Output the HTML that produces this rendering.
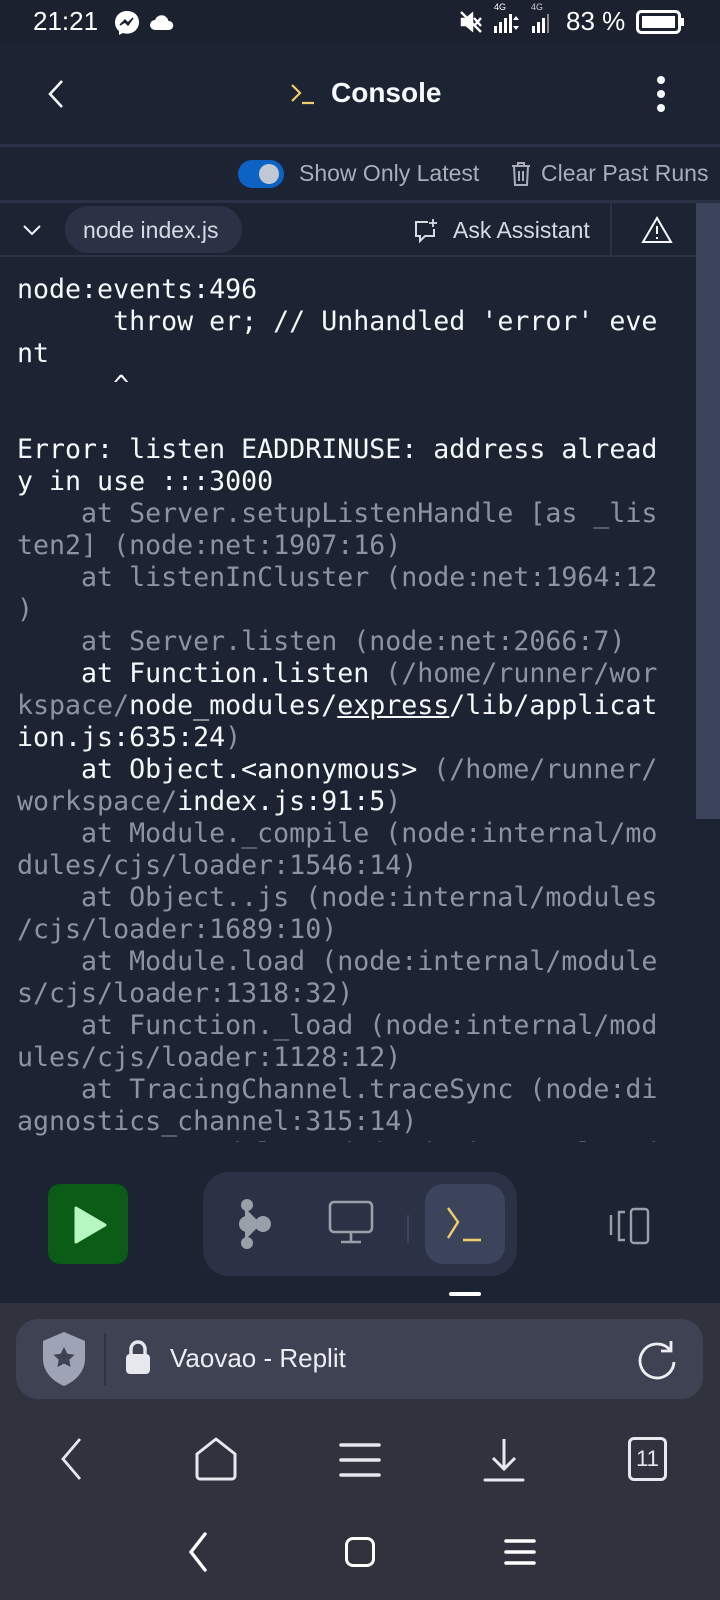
<!DOCTYPE html>
<html><head><meta charset="utf-8"><style>
*{margin:0;padding:0;box-sizing:border-box}
body{width:720px;height:1600px;background:#1c2333;position:relative;overflow:hidden;font-family:"Liberation Sans",sans-serif;color:#f5f9fc}
.abs{position:absolute}
.con{position:absolute;left:17px;top:274px;width:680px;height:868px;overflow:hidden;font-family:"DejaVu Sans Mono",monospace;font-size:26.6px;line-height:32px;white-space:pre;color:#f5f9fc}
.g{color:#8c93a1}
.u{text-decoration:underline}
svg{position:absolute;overflow:visible}
</style></head><body>
<!-- status bar -->
<div class="abs" style="left:0;top:0;width:720px;height:44px;background:#1c2130"></div>
<div class="abs" style="left:33px;top:6px;font-size:26px;color:#fff">21:21</div>
<svg style="left:114px;top:10px" width="26" height="26" viewBox="0 0 26 26"><path d="M13 1C6 1 1 6 1 12.5c0 3.5 1.5 6.5 4 8.5v4l3.8-2c1.3.4 2.7.6 4.2.6 7 0 12-5 12-11.5S20 1 13 1z" fill="#fff"/><path d="M6 15l5-5 3 3 5-5-5 7-3-3z" fill="#1c2130" stroke="#1c2130" stroke-width="1.5"/></svg>
<svg style="left:150px;top:13px" width="24" height="18" viewBox="0 0 24 18"><path d="M5 17a5 5 0 010-10 7 7 0 0113.5 1A4.5 4.5 0 0119 17z" fill="#fff"/></svg>
<svg style="left:459px;top:10px" width="24" height="24" viewBox="0 0 24 24" fill="none" stroke="#fff" stroke-width="2.4"><path d="M3 9h4l6-5v16l-6-5H3z" fill="#fff"/><path d="M15 8l7 8M22 8l-7 8M2 2l20 20"/></svg>
<div class="abs" style="left:494px;top:2px;font-size:9px;color:#fff">4G</div>
<div class="abs" style="left:531px;top:2px;font-size:9px;color:#ccc">4G</div>
<svg style="left:494px;top:13px" width="60" height="20" viewBox="0 0 60 20" fill="#fff"><rect x="0" y="13" width="3" height="7"/><rect x="5" y="9" width="3" height="11"/><rect x="10" y="5" width="3" height="15"/><rect x="15" y="1" width="3" height="19"/><path d="M20 3l3 4h-6zM20 17l3-4h-6z" transform="translate(2 0)"/><rect x="38" y="13" width="3" height="7"/><rect x="43" y="9" width="3" height="11"/><rect x="48" y="5" width="3" height="15"/><rect x="53" y="1" width="2" height="19" fill="#888"/></svg>
<div class="abs" style="left:566px;top:6px;font-size:26px;color:#fff">83 %</div>
<svg style="left:636px;top:10px" width="50" height="24" viewBox="0 0 50 24"><rect x="1.5" y="1.5" width="42" height="21" rx="4" fill="none" stroke="#fff" stroke-width="3"/><rect x="6" y="6" width="33" height="12" fill="#fff"/><rect x="45" y="8" width="3" height="8" fill="#fff"/></svg>
<!-- header -->
<svg style="left:46px;top:79px" width="20" height="30" viewBox="0 0 20 30"><path d="M16 2L4 15l12 13" fill="none" stroke="#f5f9fc" stroke-width="2.6"/></svg>
<svg style="left:290px;top:83px" width="26" height="22" viewBox="0 0 26 22" fill="none" stroke="#f2cb6b" stroke-width="2.2"><path d="M2 2l8 8-8 8M12 20h12"/></svg>
<div class="abs" style="left:331px;top:77px;font-size:28px;font-weight:bold;color:#f5f9fc">Console</div>
<svg style="left:655px;top:75px" width="12" height="38" viewBox="0 0 12 38" fill="#f5f9fc"><circle cx="6" cy="5" r="4"/><circle cx="6" cy="19" r="4"/><circle cx="6" cy="33" r="4"/></svg>
<div class="abs" style="left:0;top:144px;width:720px;height:3px;background:#2b3245"></div>
<!-- toolbar -->
<div class="abs" style="left:238px;top:160px;width:46px;height:28px;border-radius:14px;background:#0c63c4"></div>
<div class="abs" style="left:259px;top:164px;width:20px;height:20px;border-radius:10px;background:#c2c8d3"></div>
<div class="abs" style="left:299px;top:160px;font-size:23px;color:#a8afbb">Show Only Latest</div>
<svg style="left:511px;top:161px" width="20" height="26" viewBox="0 0 20 26" fill="none" stroke="#a8afbb" stroke-width="2"><path d="M1 5h18M7 5V2h6v3M3 5l1 19h12l1-19M8 10v10M12 10v10"/></svg>
<div class="abs" style="left:541px;top:160px;font-size:23px;color:#a8afbb">Clear Past Runs</div>
<div class="abs" style="left:0;top:200px;width:720px;height:3px;background:#2b3245"></div>
<!-- tab row -->
<svg style="left:22px;top:224px" width="20" height="12" viewBox="0 0 20 12"><path d="M2 2l8 8 8-8" fill="none" stroke="#f5f9fc" stroke-width="2"/></svg>
<div class="abs" style="left:65px;top:206px;width:177px;height:47px;border-radius:24px;background:#2b3245"></div>
<div class="abs" style="left:83px;top:217px;font-size:23px;color:#d6dbe3">node index.js</div>
<svg style="left:414px;top:218px" width="24" height="26" viewBox="0 0 24 26" fill="none" stroke="#d6dbe3" stroke-width="2"><path d="M14 4H2v14h4v5l5-5h9v-7"/><path d="M19 1v8M15 5h8" stroke-width="1.8"/></svg>
<div class="abs" style="left:453px;top:217px;font-size:23px;color:#d6dbe3">Ask Assistant</div>
<div class="abs" style="left:610px;top:203px;width:2px;height:53px;background:#2b3245"></div>
<svg style="left:641px;top:216px" width="32" height="28" viewBox="0 0 32 28" fill="none" stroke="#f5f9fc" stroke-width="2"><path d="M16 2L2 26h28z"/><path d="M16 10v8M16 21v2"/></svg>
<div class="abs" style="left:0;top:255px;width:696px;height:2px;background:#2b3245"></div>
<div class="abs" style="left:696px;top:203px;width:24px;height:616px;background:#3c445c"></div>
<!-- console -->
<div class="con">node:events:496
      throw er; // Unhandled 'error' eve
nt
      ^

Error: listen EADDRINUSE: address alread
y in use :::3000
<span class="g">    at Server.setupListenHandle [as _lis
ten2] (node:net:1907:16)
    at listenInCluster (node:net:1964:12
)
    at Server.listen (node:net:2066:7)</span>
    at Function.listen <span class="g">(/home/runner/wor
kspace/</span>node_modules/<span class="u">express</span>/lib/applicat
ion.js:635:24<span class="g">)</span>
    at Object.&lt;anonymous&gt; <span class="g">(/home/runner/
workspace/</span>index.js:91:5<span class="g">)
    at Module._compile (node:internal/mo
dules/cjs/loader:1546:14)
    at Object..js (node:internal/modules
/cjs/loader:1689:10)
    at Module.load (node:internal/module
s/cjs/loader:1318:32)
    at Function._load (node:internal/mod
ules/cjs/loader:1128:12)
    at TracingChannel.traceSync (node:di
agnostics_channel:315:14)
    at wrapModuleLoad (node:internal/mod</span></div>
<!-- bottom bar -->
<div class="abs" style="left:48px;top:1184px;width:80px;height:80px;border-radius:12px;background:#0a5c17"></div>
<svg style="left:72px;top:1205px" width="36" height="40" viewBox="0 0 36 40"><path d="M4 3v34l29-17z" fill="#b6f7bf" stroke="#b6f7bf" stroke-width="3" stroke-linejoin="round"/></svg>
<div class="abs" style="left:203px;top:1172px;width:314px;height:104px;border-radius:26px;background:#2b3245"></div>
<svg style="left:237px;top:1198px" width="36" height="52" viewBox="0 0 36 52" fill="#9aa0aa"><circle cx="10" cy="7" r="6"/><circle cx="10" cy="26" r="8"/><circle cx="10" cy="45" r="6"/><circle cx="26" cy="26" r="8"/><path d="M8 10l12 12v8L8 42z"/></svg>
<svg style="left:328px;top:1200px" width="46" height="46" viewBox="0 0 46 46" fill="none" stroke="#9aa0aa" stroke-width="2.6"><rect x="2" y="2" width="42" height="30" rx="4"/><path d="M23 32v9M13 42h20"/></svg>
<div class="abs" style="left:407px;top:1215px;width:2px;height:28px;background:#3c445c"></div>
<div class="abs" style="left:425px;top:1184px;width:80px;height:80px;border-radius:18px;background:#3c445c"></div>
<svg style="left:446px;top:1206px" width="40" height="38" viewBox="0 0 40 38" fill="none" stroke="#f2cb6b" stroke-width="2.4"><path d="M2 2l10 14-10 16M17 34h18"/></svg>
<svg style="left:609px;top:1207px" width="44" height="38" viewBox="0 0 44 38" fill="none" stroke="#9aa0aa" stroke-width="2.4"><path d="M2 8v20M16 5H10v28h6"/><rect x="22" y="2" width="17" height="34" rx="3"/></svg>
<div class="abs" style="left:449px;top:1292px;width:32px;height:4px;border-radius:2px;background:#fff"></div>
<!-- browser -->
<div class="abs" style="left:0;top:1303px;width:720px;height:297px;background:#30323e"></div>
<div class="abs" style="left:16px;top:1319px;width:687px;height:80px;border-radius:22px;background:#3f4252"></div>
<svg style="left:41px;top:1330px" width="46" height="58" viewBox="0 0 46 58"><path d="M23 2L2 11v18c0 12 9 22 21 27 12-5 21-15 21-27V11z" fill="#9ea3b6"/><path d="M23 17l3.3 6.7 7.2 1-5.2 5 1.2 7.2L23 33.6 16.5 37l1.2-7.2-5.2-5 7.2-1z" fill="#3f4252"/></svg>
<div class="abs" style="left:104px;top:1333px;width:2px;height:52px;background:#2f3240"></div>
<svg style="left:125px;top:1339px" width="26" height="36" viewBox="0 0 26 36"><path d="M6 16V10a7 7 0 0114 0v6" fill="none" stroke="#e7e8ee" stroke-width="3.4"/><rect x="1" y="15" width="24" height="20" rx="4" fill="#e7e8ee"/></svg>
<div class="abs" style="left:170px;top:1343px;font-size:26px;color:#eceef3">Vaovao - Replit</div>
<svg style="left:636px;top:1339px" width="42" height="42" viewBox="0 0 42 42" fill="none" stroke="#eceef3" stroke-width="2.8"><path d="M34 11A17 17 0 1038 23"/><path d="M35 2v10H25"/></svg>
<!-- nav -->
<svg style="left:60px;top:1437px" width="24" height="44" viewBox="0 0 24 44"><path d="M20 2L3 22l17 20" fill="none" stroke="#e7e8ee" stroke-width="2.8"/></svg>
<svg style="left:194px;top:1437px" width="44" height="44" viewBox="0 0 44 44"><path d="M22 2L3 17v22a3 3 0 003 3h32a3 3 0 003-3V17z" fill="none" stroke="#e7e8ee" stroke-width="3" stroke-linejoin="round"/></svg>
<svg style="left:339px;top:1442px" width="42" height="36" viewBox="0 0 42 36" stroke="#e7e8ee" stroke-width="3.5" stroke-linecap="round"><path d="M2 3h38M2 18h38M2 33h38"/></svg>
<svg style="left:483px;top:1437px" width="42" height="46" viewBox="0 0 42 46" fill="none" stroke="#e7e8ee" stroke-width="3"><path d="M21 2v30M10 21l11 11 11-11"/><path d="M2 43h38" stroke-linecap="round"/></svg>
<div class="abs" style="left:628px;top:1437px;width:39px;height:44px;border:3px solid #e7e8ee;border-radius:6px;font-size:22px;color:#e7e8ee;text-align:center;line-height:38px">11</div>
<svg style="left:187px;top:1532px" width="22" height="40" viewBox="0 0 22 40"><path d="M18 2L4 20l14 18" fill="none" stroke="#fff" stroke-width="3.4" stroke-linecap="round"/></svg>
<div class="abs" style="left:345px;top:1537px;width:30px;height:30px;border:3.5px solid #fff;border-radius:8px"></div>
<svg style="left:504px;top:1538px" width="32" height="28" viewBox="0 0 32 28" stroke="#fff" stroke-width="3.5" stroke-linecap="round"><path d="M2 3h28M2 14h28M2 25h28"/></svg>
</body></html>
